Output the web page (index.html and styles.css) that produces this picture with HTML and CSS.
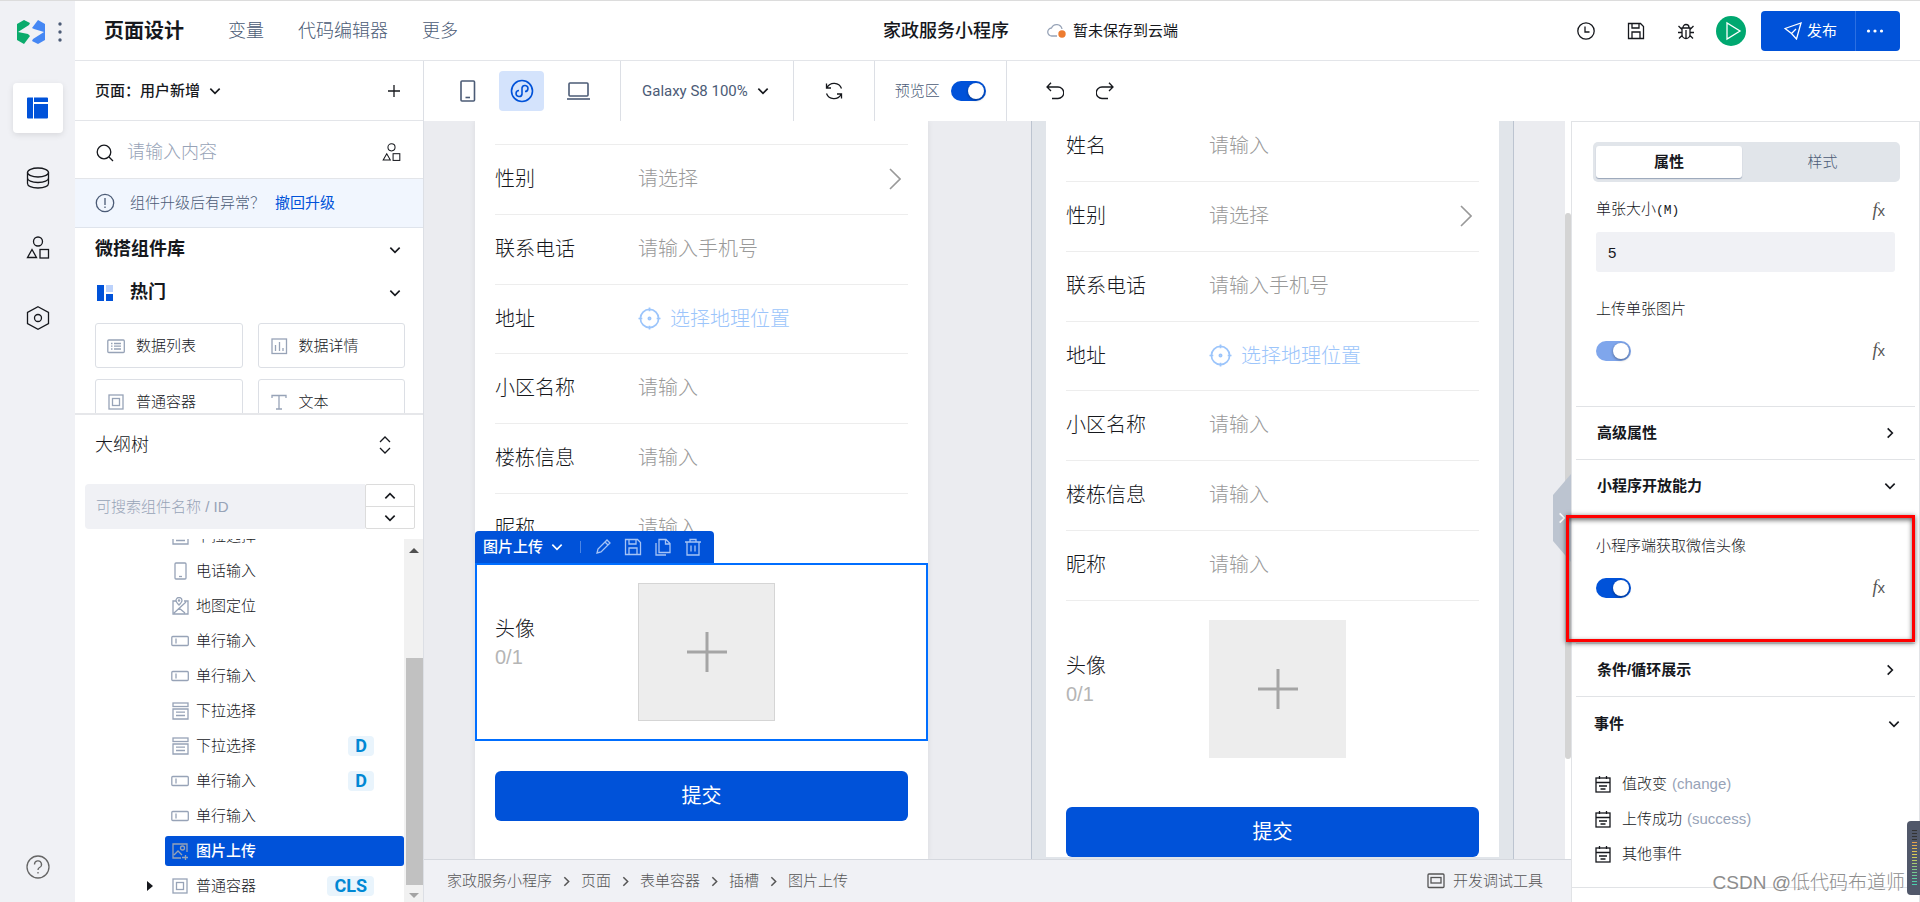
FILE: index.html
```html
<!DOCTYPE html>
<html lang="zh-CN">
<head>
<meta charset="utf-8">
<title>页面设计</title>
<link rel="stylesheet" href="styles.css">
</head>
<body>
<svg class="sprite" aria-hidden="true">
  <symbol id="down" viewBox="0 0 12 12"><path d="M2 4l4 4 4-4"/></symbol>
  <symbol id="up" viewBox="0 0 12 12"><path d="M2 8l4-4 4 4"/></symbol>
  <symbol id="right" viewBox="0 0 12 12"><path d="M4 2l4 4-4 4"/></symbol>
  <symbol id="shapes" viewBox="0 0 24 24"><circle cx="12" cy="5.500" r="4.500"/><path d="M6 13.500L1.500 21.500h9z"/><rect x="14" y="13.500" width="8.500" height="8.500"/></symbol>
  <symbol id="phone" viewBox="0 0 18 18"><rect x="4" y="1" width="11" height="16" rx="1"/><path d="M8 14.500h3"/></symbol>
  <symbol id="map" viewBox="0 0 18 18"><path d="M5 4H2v13h15V4h-4M3 16l12-11M8 11l6 5"/><path d="M8 8C6 6 5 5 5 3.500a3 3 0 0 1 6 0C11 5 10 6 8 8z"/><circle cx="8" cy="3.500" r=".6"/></symbol>
  <symbol id="field" viewBox="0 0 18 18"><rect x=".8" y="4.500" width="16.500" height="9" rx="1"/><path d="M5 6.500v5"/></symbol>
  <symbol id="drop" viewBox="0 0 18 18"><rect x="2" y="1" width="15" height="3.500"/><path d="M2 7h15v10H2zM5 10.200h9M5 13.500h9"/></symbol>
  <symbol id="box" viewBox="0 0 18 18"><rect x="2" y="2" width="14" height="14"/><rect x="5.500" y="5.500" width="7" height="7"/></symbol>
  <symbol id="image" viewBox="0 0 18 18"><path d="M10 16H2V2h14v8M3 13l4-4 4 4M11 15.500h6M14.500 13v6"/><circle cx="11.500" cy="6" r="2"/></symbol>
  <symbol id="list" viewBox="0 0 18 18"><rect x=".8" y="3" width="16.500" height="12.500" rx="1"/><path d="M7 6.500h7M7 9.200h7M7 12h7M4 6.500h1.500M4 9.200h1.500M4 12h1.500"/></symbol>
  <symbol id="chart" viewBox="0 0 18 18"><rect x="2" y="2" width="14.500" height="14.500"/><path d="M5.500 8v6M9.500 5v9M13 11v3"/></symbol>
  <symbol id="text" viewBox="0 0 18 18"><path d="M2 5V2.500h14V5M9 2.500V16M6 16h6"/></symbol>
  <symbol id="save" viewBox="0 0 18 18"><path d="M1.500 1.500h12l3 3v12h-15zM5 1.500V6h7V1.500M5 16.500V10h8v6.500"/></symbol>
  <symbol id="target" viewBox="0 0 24 24"><circle cx="12" cy="12" r="9.500"/><path d="M12 .5v4M12 19.500v4M.5 12h4M19.500 12h4"/><circle cx="12" cy="12" r="1.200"/></symbol>
  <symbol id="event" viewBox="0 0 18 18"><rect x="2" y="3" width="14" height="14"/><path d="M5.500 1v3M12.500 1v3M2 7.500h14M5 11h8M6.500 14h5"/></symbol>
</svg>
<div class="app">
  <aside class="rail">
    <div class="brand">
      <svg class="logo" viewBox="0 0 28 24"><path fill="#0aab6c" d="M0 4L7 0l6 3-1 2L1 12l10 2 2 2-6 8-7-4z"/><path fill="#4587f4" d="M28 20l-7 4-6-3 1-2 11-7-10-3-2-1 6-8 7 4z"/></svg>
      <svg class="more-dots" viewBox="0 0 4 22"><circle cx="2" cy="3" r="1.700"/><circle cx="2" cy="11" r="1.700"/><circle cx="2" cy="19" r="1.700"/></svg>
    </div>
    <button class="rail-btn active" aria-label="布局"><svg viewBox="0 0 24 24"><path fill="#0052d9" stroke="none" d="M2 1.500h5v21H2a1 1 0 0 1-1-1v-19a1 1 0 0 1 1-1zM8 1.500h13a1 1 0 0 1 1 1V6H8zM8 8h14v13.500a1 1 0 0 1-1 1H8z"/></svg></button>
    <button class="rail-btn" aria-label="数据"><svg viewBox="0 0 24 24"><ellipse cx="12" cy="6.500" rx="10.500" ry="4.500"/><path d="M1.500 6.500v11c0 2.500 4 4.500 10.500 4.500s10.500-2 10.500-4.500v-11M1.500 12c0 2.500 4 4.500 10.500 4.500s10.500-2 10.500-4.500"/></svg></button>
    <button class="rail-btn" aria-label="组件"><svg><use href="#shapes"/></svg></button>
    <button class="rail-btn" aria-label="设置"><svg viewBox="0 0 24 24"><path d="M12 .8l10.500 5.700v11L12 23.200 1.500 17.500v-11z"/><circle cx="12" cy="12" r="3.500"/></svg></button>
    <button class="rail-btn help" aria-label="帮助"><svg viewBox="0 0 24 24"><circle cx="12" cy="12" r="11"/><path d="M8.500 9.500a3.500 3.500 0 1 1 5 3c-1 .6-1.500 1-1.500 2.500M12 17v1.500"/></svg></button>
  </aside>

  <div class="main">
    <header class="topbar">
      <nav class="tabs">
        <a href="#" class="current">页面设计</a><a href="#">变量</a><a href="#">代码编辑器</a><a href="#">更多</a>
      </nav>
      <div class="project">
        <h1>家政服务小程序</h1>
        <span class="cloud"><svg viewBox="0 0 20 16"><path d="M10 13H5a4 4 0 0 1-.5-8A5.500 5.500 0 0 1 15 6"/><circle cx="15" cy="11" r="3.700"/></svg>暂未保存到云端</span>
      </div>
      <div class="actions">
        <button class="icon" aria-label="历史"><svg viewBox="0 0 18 18"><circle cx="9" cy="9" r="8.200"/><path d="M8 4.500V10h4.500"/></svg></button>
        <button class="icon" aria-label="保存"><svg><use href="#save"/></svg></button>
        <button class="icon" aria-label="调试"><svg viewBox="0 0 18 18"><path d="M5 6h8v6.500a4 4 0 0 1-8 0zM6 5.500a3 3 0 0 1 6 0M9 8v8M1.500 4L5 7.500M16.500 4L13 7.500M1 10.500h4M13 10.500h4M2 16.500l3-3M16 16.500l-3-3"/></svg></button>
        <button class="play" aria-label="预览"><svg viewBox="0 0 30 30"><path d="M11 7v16l13-8z"/></svg></button>
        <div class="publish">
          <button><svg viewBox="0 0 18 18"><path d="M1 6.500L17 1l-4.500 16-5-5.500zM7.500 11.500L12 7"/></svg>发布</button>
          <button class="dots" aria-label="更多操作"><svg viewBox="0 0 18 4"><circle cx="2.500" cy="2" r="1.600"/><circle cx="9" cy="2" r="1.600"/><circle cx="15.500" cy="2" r="1.600"/></svg></button>
        </div>
      </div>
    </header>

    <div class="work">
      <aside class="left">
        <div class="page-row">
          <button class="page-pick">页面：用户新增<svg class="chev"><use href="#down"/></svg></button>
          <button class="icon" aria-label="新增页面"><svg viewBox="0 0 18 18"><path d="M9 3v12M3 9h12"/></svg></button>
        </div>
        <div class="search-row">
          <svg class="i18" viewBox="0 0 18 18"><circle cx="8" cy="8" r="6.800"/><path d="M13 13l4 4"/></svg>
          <input type="text" aria-label="搜索组件" placeholder="请输入内容">
          <button class="icon" aria-label="组件市场"><svg><use href="#shapes"/></svg></button>
        </div>
        <div class="notice">
          <svg viewBox="0 0 20 20"><circle cx="10" cy="10" r="8.700"/><path d="M10 5v7M10 13.500v1.500"/></svg>
          <span>组件升级后有异常？</span><a href="#">撤回升级</a>
        </div>
        <section class="library">
          <h2>微搭组件库<svg class="chev"><use href="#down"/></svg></h2>
          <h3><svg class="hot" viewBox="0 0 16 16"><path fill="#0052d9" d="M0 0h7v16H0zM9 9h7v7H9z"/><path fill="#bcd2fb" d="M9 0h7v7H9z"/></svg>热门<svg class="chev"><use href="#down"/></svg></h3>
          <div class="cards">
            <button><svg><use href="#list"/></svg>数据列表</button>
            <button><svg><use href="#chart"/></svg>数据详情</button>
            <button><svg><use href="#box"/></svg>普通容器</button>
            <button><svg><use href="#text"/></svg>文本</button>
          </div>
        </section>
        <section class="outline">
          <div class="outline-head"><h2>大纲树</h2><svg viewBox="0 0 12 18"><path d="M1 6l5-5 5 5M1 12l5 5 5-5"/></svg></div>
          <div class="outline-search">
            <input type="text" aria-label="搜索大纲" placeholder="可搜索组件名称 / ID">
            <div class="stepper"><button aria-label="上一个"><svg class="chev"><use href="#up"/></svg></button><button aria-label="下一个"><svg class="chev"><use href="#down"/></svg></button></div>
          </div>
          <div class="tree-wrap">
            <ul class="tree">
              <li><div><svg><use href="#drop"/></svg>下拉选择</div></li>
              <li><div><svg><use href="#phone"/></svg>电话输入</div></li>
              <li><div><svg><use href="#map"/></svg>地图定位</div></li>
              <li><div><svg><use href="#field"/></svg>单行输入</div></li>
              <li><div><svg><use href="#field"/></svg>单行输入</div></li>
              <li><div><svg><use href="#drop"/></svg>下拉选择</div></li>
              <li><div><svg><use href="#drop"/></svg>下拉选择<b>D</b></div></li>
              <li><div><svg><use href="#field"/></svg>单行输入<b>D</b></div></li>
              <li><div><svg><use href="#field"/></svg>单行输入</div></li>
              <li class="selected"><div><svg><use href="#image"/></svg>图片上传</div></li>
              <li class="parent"><div><svg><use href="#box"/></svg>普通容器<b>CLS</b></div></li>
            </ul>
            <div class="scroll"><i class="arrow-up"></i><span></span><i class="arrow-down"></i></div>
          </div>
        </section>
      </aside>

      <div class="stage">
        <div class="toolbar">
          <div class="seg devices">
            <button aria-label="手机"><svg viewBox="0 0 16 22"><rect x="1" y="1" width="13.500" height="20" rx="1"/><path d="M5.500 17.500h4.500"/></svg></button>
            <button class="mini" aria-label="小程序"><svg viewBox="0 0 24 24"><circle cx="12" cy="12" r="10.500"/><path d="M9 11.500A3 3 0 1 0 12 15V9a3 3 0 1 1 3 3.500"/></svg></button>
            <button aria-label="电脑"><svg class="wide" viewBox="0 0 23 20"><rect x="2" y="2" width="19" height="13" rx="1"/><path d="M0 18h23"/></svg></button>
          </div>
          <button class="seg device-name">Galaxy S8 100%<svg class="chev"><use href="#down"/></svg></button>
          <button class="seg refresh" aria-label="刷新"><svg viewBox="0 0 20 20"><path d="M3 6.500a8 8 0 0 1 14.500 1M17 13.500A8 8 0 0 1 2.500 12.500M2.500 2.500V7h4.500M17.500 17.500V13H13"/></svg></button>
          <label class="seg preview">预览区<input class="switch" type="checkbox" checked></label>
          <div class="undo">
            <button class="icon" aria-label="撤销"><svg viewBox="0 0 18 18"><path d="M5 .8L1 5l4 4M1.500 5H12a5.500 5.500 0 0 1 0 11.500H6"/></svg></button>
            <button class="icon" aria-label="重做"><svg viewBox="0 0 18 18"><path d="M13 .8L17 5l-4 4M16.500 5H6a5.500 5.500 0 0 0 0 11.500h6"/></svg></button>
          </div>
        </div>
        <div class="body">
          <div class="center">
            <div class="canvas">
              <form class="device editing">
                <div class="row clipped"></div>
                <div class="row"><label for="a1">性别</label><select id="a1"><option>请选择</option></select><svg class="go" viewBox="0 0 12 22"><path d="M1 1l10 10L1 21"/></svg></div>
                <div class="row"><label for="a2">联系电话</label><input id="a2" placeholder="请输入手机号"></div>
                <div class="row short"><label for="a3">地址</label><button id="a3" type="button"><svg><use href="#target"/></svg>选择地理位置</button></div>
                <div class="row"><label for="a4">小区名称</label><input id="a4" placeholder="请输入"></div>
                <div class="row"><label for="a5">楼栋信息</label><input id="a5" placeholder="请输入"></div>
                <div class="row last"><label for="a6">昵称</label><input id="a6" placeholder="请输入"></div>
                <div class="upload">
                  <div class="toolchip">
                    <button type="button">图片上传<svg class="chev"><use href="#down"/></svg></button><i></i>
                    <button type="button" aria-label="编辑"><svg viewBox="0 0 18 18"><path d="M3 15l1-4L13 2l3 3-9 9zM11 4l3 3"/></svg></button>
                    <button type="button" aria-label="保存"><svg><use href="#save"/></svg></button>
                    <button type="button" aria-label="复制"><svg viewBox="0 0 18 18"><path d="M5 1.500h7l4 4v9H5zM11.500 1.500V6H16M2 5v12h10"/></svg></button>
                    <button type="button" aria-label="删除"><svg viewBox="0 0 18 18"><path d="M1 4h16M6 4V1.500h6V4M3 4v13h12V4M7 7.500v6M11 7.500v6"/></svg></button>
                  </div>
                  <div class="caption">头像<small>0/1</small></div>
                  <button type="button" class="drop" aria-label="上传图片"><svg viewBox="0 0 40 40"><path d="M20 0v40M0 20h40"/></svg></button>
                </div>
                <button type="button" class="submit">提交</button>
              </form>
              <div class="frame">
                <form class="device">
                  <div class="row first"><label for="b0">姓名</label><input id="b0" placeholder="请输入"></div>
                  <div class="row"><label for="b1">性别</label><select id="b1"><option>请选择</option></select><svg class="go" viewBox="0 0 12 22"><path d="M1 1l10 10L1 21"/></svg></div>
                  <div class="row"><label for="b2">联系电话</label><input id="b2" placeholder="请输入手机号"></div>
                  <div class="row short"><label for="b3">地址</label><button id="b3" type="button"><svg><use href="#target"/></svg>选择地理位置</button></div>
                  <div class="row"><label for="b4">小区名称</label><input id="b4" placeholder="请输入"></div>
                  <div class="row"><label for="b5">楼栋信息</label><input id="b5" placeholder="请输入"></div>
                  <div class="row"><label for="b6">昵称</label><input id="b6" placeholder="请输入"></div>
                  <div class="upload">
                    <div class="caption">头像<small>0/1</small></div>
                    <button type="button" class="drop" aria-label="上传图片"><svg viewBox="0 0 40 40"><path d="M20 0v40M0 20h40"/></svg></button>
                  </div>
                  <button type="button" class="submit">提交</button>
                </form>
              </div>
              <div class="canvas-scroll"><span></span></div>
              <button class="handle" aria-label="收起面板"><svg class="chev"><use href="#right"/></svg></button>
            </div>
            <footer class="crumbs">
              <a href="#">家政服务小程序</a><svg class="chev"><use href="#right"/></svg><a href="#">页面</a><svg class="chev"><use href="#right"/></svg><a href="#">表单容器</a><svg class="chev"><use href="#right"/></svg><a href="#">插槽</a><svg class="chev"><use href="#right"/></svg><a href="#">图片上传</a>
              <button class="dev"><svg viewBox="0 0 18 18"><rect x="1" y="2" width="16" height="13.500" rx="1"/><rect x="4" y="5.500" width="10" height="5.500"/></svg>开发调试工具</button>
            </footer>
          </div>

          <aside class="props">
            <div class="switcher"><button class="on">属性</button><button>样式</button></div>
            <div class="prop size">
              <div class="line"><label for="size">单张大小<span>(M)</span></label><button class="fx"><i>f</i>x</button></div>
              <input id="size" class="value" type="text" value="5">
            </div>
            <div class="prop single">
              <label for="single">上传单张图片</label>
              <div class="line"><input id="single" class="switch soft" type="checkbox" checked><button class="fx"><i>f</i>x</button></div>
            </div>
            <button class="group">高级属性<svg class="chev"><use href="#right"/></svg></button>
            <button class="group">小程序开放能力<svg class="chev"><use href="#down"/></svg></button>
            <div class="prop avatar">
              <label for="avatar">小程序端获取微信头像</label>
              <div class="line"><input id="avatar" class="switch" type="checkbox" checked><button class="fx"><i>f</i>x</button></div>
              <div class="highlight"></div>
            </div>
            <button class="group">条件/循环展示<svg class="chev"><use href="#right"/></svg></button>
            <button class="group events-head">事件<svg class="chev"><use href="#down"/></svg></button>
            <ul class="events">
              <li><svg><use href="#event"/></svg>值改变 <span>(change)</span></li>
              <li><svg><use href="#event"/></svg>上传成功 <span>(success)</span></li>
              <li><svg><use href="#event"/></svg>其他事件</li>
            </ul>
            <div class="watermark">CSDN @低代码布道师</div>
            <div class="meter"><span></span></div>
          </aside>
        </div>
      </div>
    </div>
  </div>
</div>
</body>
</html>
```
FILE: styles.css
```css
* { box-sizing: border-box; }
body {
  margin: 0;
  font: 300 15px/20px "Liberation Sans", "Noto Sans CJK SC", sans-serif;
  color: #16181d;
  background: #fff;
}
button, input, select { font: inherit; color: inherit; border: 0; padding: 0; margin: 0; background: none; outline: 0; }
button { display: flex; align-items: center; flex: none; }
a { color: inherit; text-decoration: none; }
h1, h2, h3, ul { margin: 0; padding: 0; list-style: none; }
svg { fill: none; stroke: currentColor; stroke-width: 1.3; flex: none; display: block; }
.sprite { position: absolute; width: 0; height: 0; }
.chev { width: 14px; height: 14px; stroke-width: 1.4; }
.icon svg, .i18 { width: 18px; height: 18px; }

.app { display: flex; height: 100vh; overflow: hidden; border-top: 1px solid #dcdcdc; }
.main { flex: 1; min-width: 0; display: flex; flex-direction: column; }

/* left rail */
.rail { width: 75px; flex: none; background: #f0f1f5; display: flex; flex-direction: column; align-items: center; gap: 20px; padding-bottom: 10px; }
.brand { display: flex; align-items: center; gap: 13px; height: 62px; padding-left: 4px; }
.logo { width: 28px; height: 24px; stroke: none; }
.more-dots { width: 4px; height: 22px; fill: #4b5b76; stroke: none; }
.rail-btn { width: 50px; height: 50px; justify-content: center; border-radius: 4px; }
.rail-btn svg { width: 24px; height: 24px; }
.rail-btn.active { background: #fff; box-shadow: 0 2px 6px #0000001a; }
.help { margin-top: auto; color: #666; }

/* top bar */
.topbar { flex: none; height: 60px; border-bottom: 1px solid #e3e5e9; display: grid; grid-template-columns: minmax(0, 808px) 1fr auto; align-items: center; padding-right: 20px; }
.tabs { display: flex; align-items: center; gap: 34px; padding-left: 29px; font-size: 18px; color: #4b5b76; }
.tabs .current { font-size: 20px; font-weight: 700; color: #16181d; margin-right: 10px; }
.project { display: flex; align-items: center; }
.project h1 { font-size: 18px; font-weight: 500; }
.cloud { display: flex; align-items: center; gap: 6px; margin-left: 38px; font-weight: 400; }
.cloud svg { width: 20px; height: 16px; color: #97a3b7; }
.cloud circle { fill: #ed7b2f; stroke: none; }
.actions { display: flex; align-items: center; gap: 32px; }
.play { width: 30px; height: 30px; border-radius: 50%; background: #00a870; color: #fff; margin-left: -11px; }
.play svg { width: 30px; height: 30px; }
.publish { display: flex; margin-left: -17px; background: #0052d9; color: #fff; border-radius: 4px; height: 40px; font-weight: 400; }
.publish button { gap: 5px; padding: 0 18px 0 23px; }
.publish button svg { width: 18px; height: 18px; }
.publish .dots { padding: 0 16px 0 10px; border-left: 1px solid #2b6fe2; }
.publish .dots svg { width: 18px; height: 4px; fill: #fff; stroke: none; }

/* component library panel */
.work { flex: 1; min-height: 0; display: flex; }
.left { width: 349px; flex: none; border-right: 1px solid #dcdfe5; display: flex; flex-direction: column; }
.page-row { height: 60px; flex: none; border-bottom: 1px solid #e3e5e9; display: flex; align-items: center; justify-content: space-between; padding: 0 20px; }
.page-pick { gap: 8px; font-weight: 500; }
.search-row { height: 58px; flex: none; border-bottom: 1px solid #e3e5e9; display: flex; align-items: center; gap: 13px; padding: 6px 22px 0 21px; }
.search-row input { flex: 1; min-width: 0; font-size: 18px; height: 28px; }
.search-row .icon svg { width: 19px; height: 19px; }
::placeholder { color: #97a3b7; opacity: 1; }
.notice { height: 49px; flex: none; background: #f1f6fe; border-bottom: 1px solid #dfe4ec; display: flex; align-items: center; padding-left: 20px; color: #4b5b76; }
.notice svg { width: 20px; height: 20px; margin-right: 15px; }
.notice a { color: #0052d9; margin-left: 10px; font-weight: 400; }
.library { height: 187px; flex: none; overflow: hidden; border-bottom: 2px solid #e6e7ea; padding: 0 18px 0 20px; }
.library h2, .library h3 { font-size: 18px; line-height: 43px; font-weight: 700; display: flex; align-items: center; height: 43px; }
.library .chev { margin: 0 3px 0 auto; }
.hot { width: 16px; height: 16px; stroke: none; margin: 0 17px 0 2px; }
.cards { display: grid; grid-template-columns: 1fr 1fr; gap: 11px 15px; padding-top: 9px; }
.cards button { height: 45px; border: 1px solid #dcdfe5; border-radius: 3px; padding-left: 11px; gap: 11px; }
.cards svg { width: 18px; height: 18px; color: #97a3b7; }

/* outline tree */
.outline { flex: 1; min-height: 0; display: flex; flex-direction: column; }
.outline-head { height: 60px; flex: none; display: flex; align-items: center; justify-content: space-between; padding: 0 32px 0 20px; }
.outline-head h2 { font-size: 18px; font-weight: 300; }
.outline-head svg { width: 12px; height: 18px; }
.outline-search { margin: 9px 8px 10px 10px; height: 45px; flex: none; display: flex; }
.outline-search input { flex: 1; min-width: 0; background: #f0f1f5; border-radius: 4px 0 0 4px; padding: 0 11px; }
.stepper { width: 50px; border: 1px solid #dcdcdc; border-radius: 2px; display: flex; flex-direction: column; }
.stepper button { flex: 1; justify-content: center; }
.stepper button + button { border-top: 1px solid #dcdcdc; }
.tree-wrap { flex: 1; min-height: 0; display: flex; overflow: hidden; }
.tree { flex: 1; margin-top: -21px; }
.tree li { height: 35px; display: flex; align-items: center; padding-left: 90px; }
.tree li div { flex: 1; height: 30px; display: flex; align-items: center; gap: 7px; padding: 0 30px 0 6px; border-radius: 3px; }
.tree svg { width: 18px; height: 18px; color: #97a3b7; overflow: visible; }
.tree b { margin-left: auto; background: #e9f4fc; color: #0088d4; border-radius: 4px; padding: 0 7px; font: 700 18px/20px Roboto, sans-serif; }
.tree .selected div { background: #0052d9; color: #fff; font-weight: 500; }
.tree .parent { padding-left: 72px; gap: 12px; }
.tree .parent::before { content: ""; border: 5px solid transparent; border-left: 6px solid #16181d; border-right: 0; }
.scroll { width: 19px; background: #f1f1f1; display: flex; flex-direction: column; align-items: center; }
.scroll span { flex: 1; width: 17px; background: #c1c1c1; margin: 105px 0 11px; align-self: flex-end; }
.scroll i { border: 5px solid transparent; flex: none; }
.scroll .arrow-up { border-top-width: 0; border-bottom-color: #505050; margin-top: 9px; }
.scroll .arrow-down { border-bottom-width: 0; border-top-color: #a3a3a3; margin: -3px 0 4px; }

/* toolbar */
.stage { flex: 1; min-width: 0; display: flex; flex-direction: column; }
.toolbar { height: 60px; flex: none; display: flex; color: #4b5b76; }
.seg { height: 60px; border-right: 1px solid #dcdfe5; display: flex; align-items: center; }
.devices { padding: 0 30px 0 36px; gap: 23px; }
.devices svg { width: 16px; height: 22px; stroke-width: 1.6; }
.devices .wide { width: 23px; height: 20px; }
.devices .mini { width: 45px; height: 40px; justify-content: center; border-radius: 4px; background: #d4e3fc; color: #0052d9; }
.devices .mini svg { width: 24px; height: 24px; }
.device-name { padding: 0 23px 0 21px; gap: 8px; font-family: Roboto, "Noto Sans CJK SC", sans-serif; font-weight: 400; }
.device-name svg, .refresh, .undo { color: #16181d; }
.refresh { width: 81px; justify-content: center; }
.refresh svg { width: 20px; height: 20px; }
.preview { padding: 0 20px; gap: 11px; }
.undo { display: flex; gap: 32px; padding-left: 39px; }
.switch { appearance: none; width: 35px; height: 20px; flex: none; border-radius: 10px; background: #0052d9; display: flex; justify-content: flex-end; padding: 2px; }
.switch::before { content: ""; width: 16px; height: 16px; border-radius: 50%; background: #fff; box-shadow: 0 1px 3px #0006; }
.soft { background: #7fa6ec; }

/* canvas */
.body { flex: 1; min-height: 0; display: flex; }
.center { flex: 1; min-width: 0; display: flex; flex-direction: column; }
.canvas { position: relative; flex: 1; min-height: 0; overflow: hidden; background: #ebecf0; display: flex; padding-left: 51px; gap: 103px; }
.device { width: 453px; flex: none; background: #fff; padding: 0 20px; font-size: 20px; line-height: 28px; }
.editing { box-shadow: 0 0 6px #00000014; }
.frame { flex: none; padding: 0 14px; background: #e1e5ea; border: solid #bcc4d0; border-width: 0 1px; }
.row { height: 70px; border-bottom: 1px solid #ededed; display: flex; align-items: center; padding-bottom: 1px; }
.row.clipped { height: 24px; }
.row.first { margin-top: -9px; }
.row.short { height: 69px; }
.row.last { border-bottom: 0; height: 69px; }
.row label { width: 143px; flex: none; }
.row input, .row select { flex: 1; min-width: 0; appearance: none; height: 30px; color: #999; }
.row ::placeholder { color: #999; }
.row button { color: #9cc5fb; gap: 9px; }
.row button svg { width: 23px; height: 23px; stroke-width: 1.8; }
.go { width: 12px; height: 22px; color: #999; margin-right: 7px; stroke-width: 1.6; }
.upload { position: relative; height: 176px; display: flex; align-items: center; }
.caption { width: 143px; flex: none; padding-bottom: 19px; }
.caption small { display: block; font-size: 20px; color: #b5b5b5; }
.drop { width: 137px; height: 138px; background: #ededed; justify-content: center; color: #a5a5a5; }
.drop svg { width: 40px; height: 40px; stroke-width: 3; }
.editing .upload { height: 178px; margin: 0 -20px; padding: 0 18px; border: 2px solid #006eff; }
.editing .drop { border: 1px solid #d5d5d5; }
.toolchip { position: absolute; left: -2px; bottom: 100%; margin-bottom: 2px; height: 32px; display: flex; align-items: center; gap: 12px; padding: 0 12px 0 8px; background: #0052d9; color: #fff; border-radius: 4px 4px 0 0; font-size: 15px; font-weight: 500; }
.toolchip button { gap: 7px; color: #a5c3f5; }
.toolchip button:first-child { color: #fff; }
.toolchip button svg:not(.chev) { width: 18px; height: 18px; }
.toolchip i { width: 1px; height: 12px; background: #4d86e4; margin: 0 1px 0 4px; }
.submit { width: 100%; height: 50px; border-radius: 6px; background: #0052d9; color: #fff; justify-content: center; margin-top: 30px; font-weight: 400; }
.canvas-scroll { position: absolute; right: 0; top: 0; bottom: 0; width: 6px; background: #fff; }
.canvas-scroll span { display: block; height: 74%; margin-top: 92px; background: #d4d4d4; border-radius: 3px; }
.handle { position: absolute; right: 0; top: 353px; width: 18px; height: 88px; justify-content: center; background: #bcc4d0; color: #fff; clip-path: polygon(100% 0, 100% 100%, 0 76%, 0 24%); }

/* breadcrumb */
.crumbs { height: 43px; flex: none; background: #f0f1f5; border-top: 1px solid #d5d8de; display: flex; align-items: center; color: #555; padding: 0 28px 0 23px; gap: 8px; }
.crumbs .chev { width: 13px; height: 13px; }
.dev { margin-left: auto; gap: 8px; }
.dev svg { width: 18px; height: 18px; }

/* property panel */
.props { position: relative; width: 349px; flex: none; border: 1px solid #e1e3e6; border-bottom: 0; padding: 20px 4px 0; }
.switcher { display: flex; height: 40px; margin: 0 15px 0 17px; padding: 4px 3px; background: #e1e5ea; border-radius: 5px; color: #4b5b76; }
.switcher button { flex: 1; justify-content: center; padding-left: 6px; border-radius: 3px; }
.switcher .on { flex: none; width: 146px; padding: 0; background: #fff; color: #16181d; font-weight: 700; box-shadow: 0 1px 1px #97a3b7; }
.prop { position: relative; padding: 0 20px; }
.prop label { display: block; line-height: 22px; }
.prop label span { font-family: "Liberation Mono", monospace; font-size: 13px; }
.line { display: flex; align-items: center; justify-content: space-between; padding-right: 10px; }
.fx { font: 15px/20px "Liberation Sans", sans-serif; color: #555; align-items: baseline; }
.fx i { font: italic 18px/20px "Liberation Serif", serif; }
.size { padding-top: 16px; }
.value { width: 100%; height: 40px; margin-top: 10px; background: #f0f1f5; border-radius: 3px; padding: 0 12px; }
.single { padding-top: 26px; height: 134px; }
.single .line, .avatar .line { margin-top: 20px; }
.group { width: 100%; height: 53px; border-top: 1px solid #e1e3e6; justify-content: space-between; padding: 0 18px 0 21px; font-weight: 700; }
.avatar { height: 131px; padding-top: 23px; }
.highlight { position: absolute; left: -10px; right: 0; top: 3px; height: 127px; border: 3px solid #f00; box-shadow: 0 1px 5px #0009, inset 0 2px 5px #0009; pointer-events: none; }
.group.events-head { padding: 0 14px 0 18px; height: 55px; }
.events { padding: 15px 19px 0 22px; margin: 0 -4px; height: 137px; border-bottom: 1px solid #e1e3e6; }
.events li { display: flex; align-items: center; height: 35px; }
.events svg { width: 18px; height: 18px; margin-right: 10px; }
.events span { color: #97a3b7; margin-left: 5px; }
.watermark { position: absolute; right: 14px; bottom: 5px; font-size: 19px; line-height: 28px; color: #8d8d8d; white-space: nowrap; }
.meter { position: absolute; right: -1px; bottom: 7px; width: 13px; height: 74px; background: #51586a; border-radius: 4px 0 0 4px; padding: 9px 3px 8px 5px; }
.meter span { display: block; height: 100%; background: repeating-linear-gradient(#0000 0 1px, #51586a 1px 3px), linear-gradient(#333 20%, #e8a04c 21%, #d9cf55 45%, #7fc98a 70%, #3fd0b4); }
```
